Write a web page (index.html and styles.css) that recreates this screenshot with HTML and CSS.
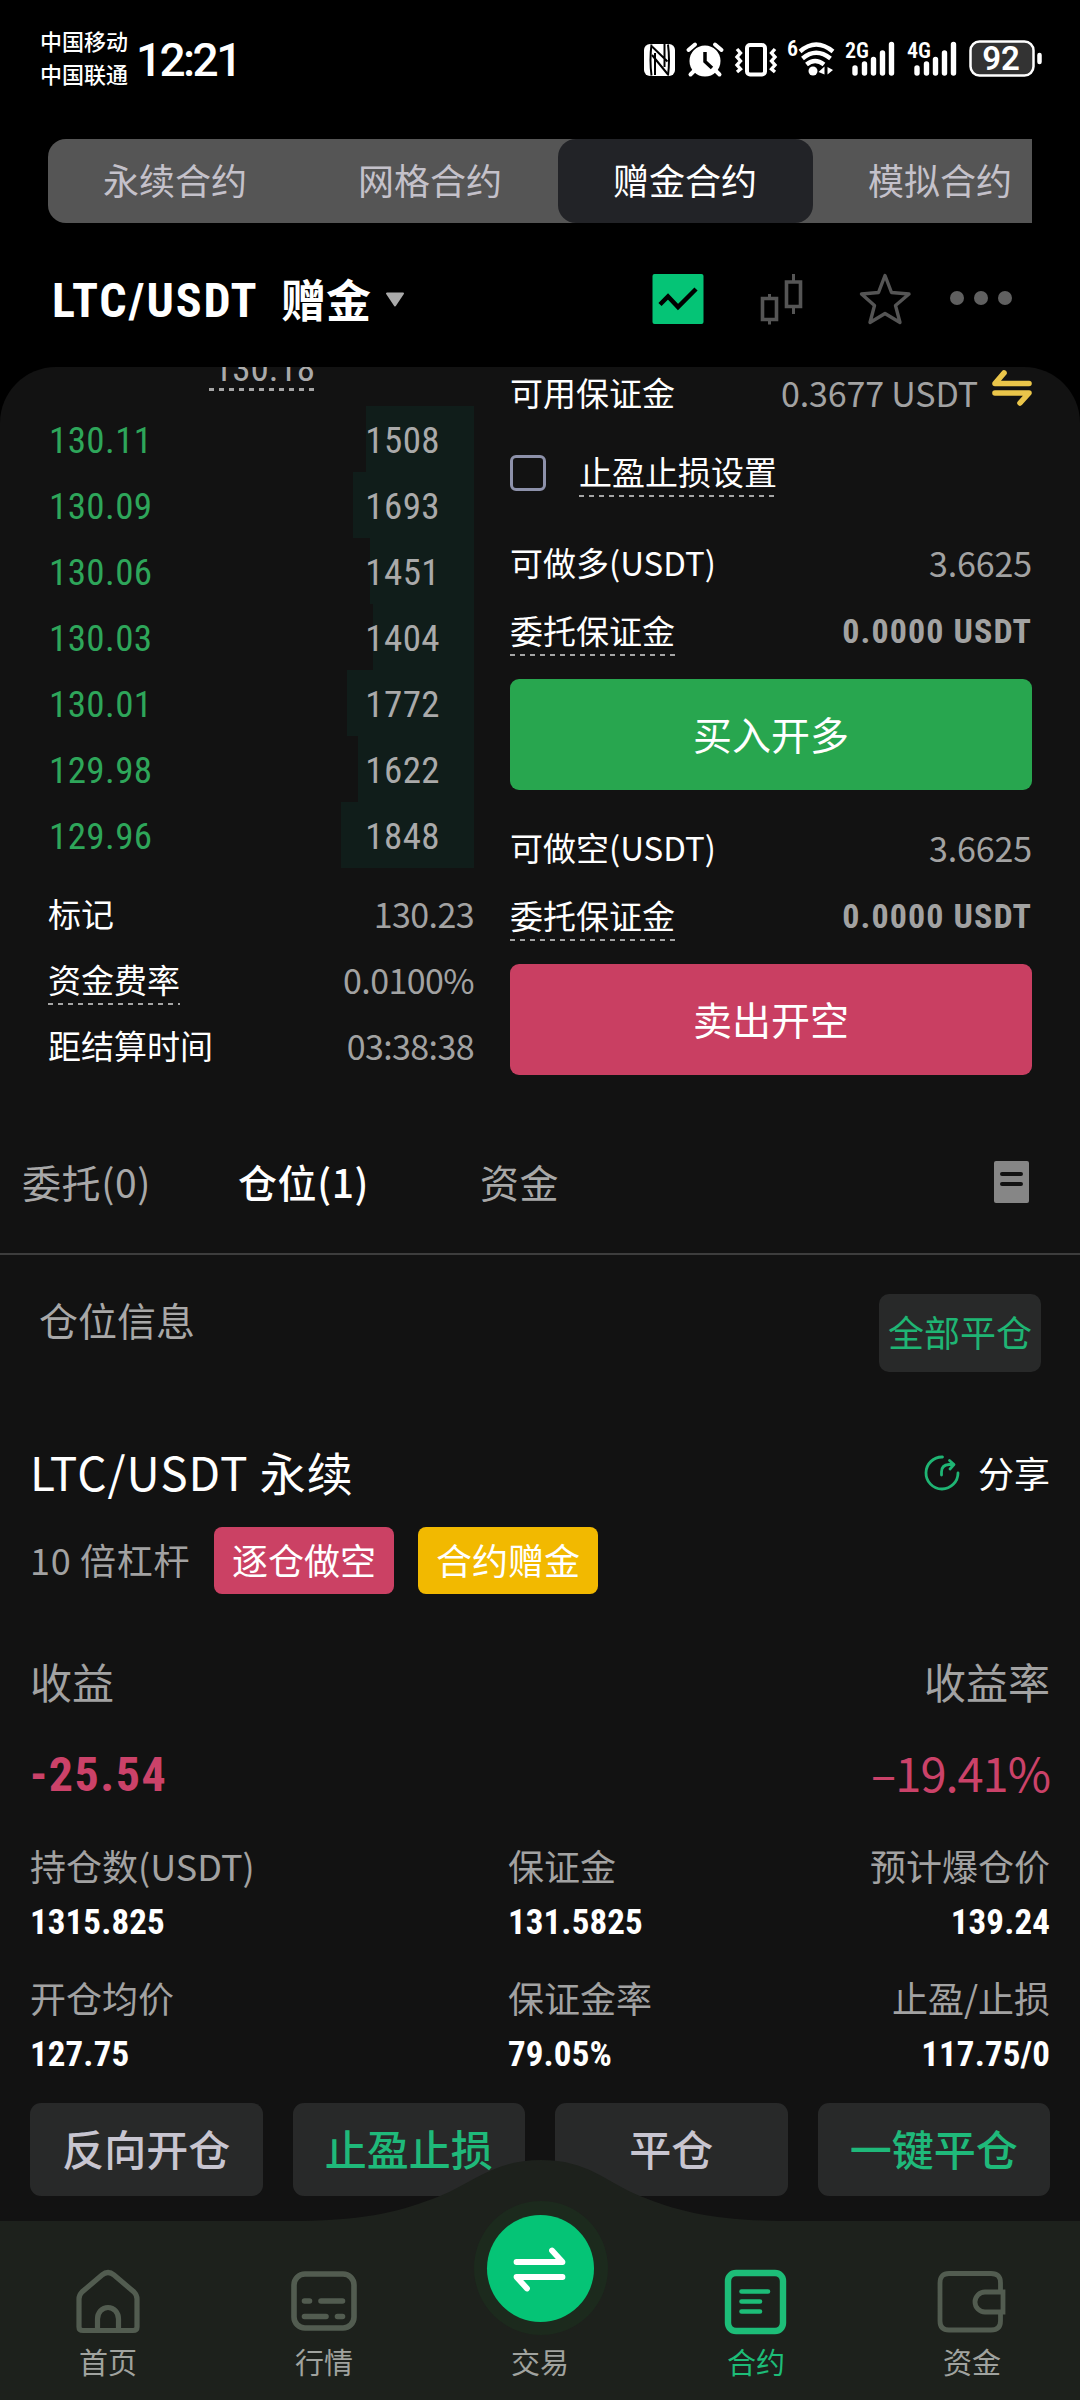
FILE: index.html
```
<!DOCTYPE html>
<html lang="zh-CN">
<head>
    <meta charset="UTF-8">
    <meta name="viewport" content="width=device-width, initial-scale=1.0">
    <title>赠金合约 LTC/USDT</title>
    <link rel="stylesheet" href="styles.css">
</head>
<body>
    <div class="status-bar">
        <div class="carriers">
            <span>中国移动</span>
            <span>中国联通</span>
        </div>
        <div class="clock">12:21</div>
        <svg class="status-icons" width="400" height="50" viewBox="644 33 400 50">
            <!-- NFC -->
            <rect x="644" y="43" width="31" height="32" rx="6" fill="#fff"/>
            <path d="M651.500 43.500Q649.500 59 651.500 74.500M668 43.500Q670 59 668 74.500" stroke="#000" stroke-width="2" fill="none"/>
            <path d="M652 45.500L667.500 60.500M652 54L668 73.500M655 52V74M664.500 43V66" stroke="#000" stroke-width="2" fill="none"/>
            <!-- alarm -->
            <circle cx="705" cy="60" r="15.500" fill="#fff"/>
            <path d="M688.500 49L695 43.500M721.500 49L715 43.500M694 70L690.500 73.500M716 70L719.500 73.500" stroke="#fff" stroke-width="4" stroke-linecap="round"/>
            <path d="M705 51V60.500L712 67" stroke="#000" stroke-width="3.500" fill="none"/>
            <!-- vibrate -->
            <rect x="747" y="44" width="18" height="29.500" rx="3" fill="none" stroke="#fff" stroke-width="4"/>
            <path d="M737 48L740.500 52L737 56L740.500 60L737 64L740.500 68L737 71M775 48L771.500 52L775 56L771.500 60L775 64L771.500 68L775 71" fill="none" stroke="#fff" stroke-width="3.400"/>
            <!-- wifi -->
            <text x="787" y="55" class="tiny">6</text>
            <path d="M800 50.500Q816 36.500 833 50.500M802.500 57.500Q816 46 830.500 57.500M806.500 63.500Q815 56.500 824 63.500" fill="none" stroke="#fff" stroke-width="4.400"/>
            <circle cx="813" cy="70" r="4.500" fill="#fff"/>
            <path d="M824.500 65.500V73.500L818.500 71ZM827.500 66L833 69L827.500 73.500Z" fill="#fff"/>
            <!-- signal -->
            <text x="845" y="57" class="tiny">2G</text>
            <path d="M855 67V72M864.500 63V72M873.500 58.500V72M882.500 52V72M891.500 43.500V72" stroke="#fff" stroke-width="5.400" stroke-linecap="round"/>
            <text x="907" y="57" class="tiny">4G</text>
            <path d="M917 67V72M926.500 63V72M935.500 58.500V72M944.500 52V72M953.500 43.500V72" stroke="#fff" stroke-width="5.400" stroke-linecap="round"/>
            <!-- battery -->
            <rect x="970.500" y="40.500" width="63" height="34" rx="9" fill="#333" stroke="#fff" stroke-width="2.500"/>
            <path d="M1039.500 54V61" stroke="#fff" stroke-width="4.500" stroke-linecap="round"/>
            <text x="1001" y="69" class="percent" text-anchor="middle">92</text>
        </svg>
    </div>

    <div class="type-tabs">
        <div class="type-tab">永续合约</div>
        <div class="type-tab">网格合约</div>
        <div class="type-tab active">赠金合约</div>
        <div class="type-tab">模拟合约</div>
    </div>

    <div class="pair-header">
        <span class="pair-name">LTC/USDT</span>
        <span class="pair-kind">赠金</span>
        <svg class="caret" width="20" height="16" viewBox="0 0 20 16"><path d="M2 1.500H18L10 13.500Z" fill="#aaa" stroke="#aaa" stroke-width="2" stroke-linejoin="round"/></svg>
        <svg class="pair-icons" width="364" height="52" viewBox="652 273 364 52">
            <rect x="652.500" y="274" width="51" height="50" rx="2" fill="#05c476"/>
            <path d="M660 304.500L668 296.500L678 307L696 289" fill="none" stroke="#000" stroke-width="4.500"/>
            <path d="M769.500 294V299M769.500 320V324.500M793.500 274V281.500M793.500 306V314" stroke="#555" stroke-width="3"/>
            <path d="M762.500 298.500H776.500V319.500H762.500ZM786.500 282H800.500V306.500H786.500Z" fill="none" stroke="#555" stroke-width="3.600"/>
            <path d="M885 275.500L891.500 292.500L909 294L895.500 305.500L900 322.500L885 313.500L870 322.500L874.500 305.500L861.500 294L878.500 292.500Z" fill="none" stroke="#555" stroke-width="3.400" stroke-linejoin="round"/>
            <circle cx="957" cy="298" r="7" fill="#606060"/>
            <circle cx="981" cy="298" r="7" fill="#606060"/>
            <circle cx="1005" cy="298" r="7" fill="#606060"/>
        </svg>
    </div>

    <div class="panel">
        <div class="trade">
            <div class="book">
                <div class="book-head"><span class="dashed">130.18</span></div>
                <div class="book-row"><span class="price">130.11</span><span class="amount">1508</span><i class="depth" style="width: 108px"></i></div>
                <div class="book-row"><span class="price">130.09</span><span class="amount">1693</span><i class="depth" style="width: 121px"></i></div>
                <div class="book-row"><span class="price">130.06</span><span class="amount">1451</span><i class="depth" style="width: 104px"></i></div>
                <div class="book-row"><span class="price">130.03</span><span class="amount">1404</span><i class="depth" style="width: 101px"></i></div>
                <div class="book-row"><span class="price">130.01</span><span class="amount">1772</span><i class="depth" style="width: 127px"></i></div>
                <div class="book-row"><span class="price">129.98</span><span class="amount">1622</span><i class="depth" style="width: 116px"></i></div>
                <div class="book-row"><span class="price">129.96</span><span class="amount">1848</span><i class="depth" style="width: 133px"></i></div>
                <div class="book-info">
                    <div class="info-row"><span>标记</span><span class="value">130.23</span></div>
                    <div class="info-row"><span class="dashed">资金费率</span><span class="value">0.0100%</span></div>
                    <div class="info-row"><span>距结算时间</span><span class="value">03:38:38</span></div>
                </div>
            </div>

            <div class="order">
                <div class="order-row available">
                    <span>可用保证金</span>
                    <span class="value">0.3677 USDT</span>
                    <svg class="transfer" width="40" height="36" viewBox="0 0 40 36"><path d="M37 13.500H3L12 3M3 23H37L28 33" fill="none" stroke="#eac54a" stroke-width="5.600" stroke-linecap="round" stroke-linejoin="round"/></svg>
                </div>
                <div class="order-row check-row">
                    <span class="checkbox"></span>
                    <span class="dashed">止盈止损设置</span>
                </div>
                <div class="order-row limit"><span>可做多(USDT)</span><span class="value">3.6625</span></div>
                <div class="order-row margin"><span class="dashed">委托保证金</span><span class="value bold">0.0000 USDT</span></div>
                <div class="btn buy">买入开多</div>
                <div class="order-row limit"><span>可做空(USDT)</span><span class="value">3.6625</span></div>
                <div class="order-row margin"><span class="dashed">委托保证金</span><span class="value bold">0.0000 USDT</span></div>
                <div class="btn sell">卖出开空</div>
            </div>
        </div>

        <div class="list-tabs">
            <span class="list-tab">委托(0)</span>
            <span class="list-tab active">仓位(1)</span>
            <span class="list-tab">资金</span>
            <svg class="history" width="35" height="42" viewBox="0 0 35 42"><rect width="35" height="42" rx="2" fill="#868686"/><path d="M8 13H27M8 23H27" stroke="#121212" stroke-width="4" stroke-linecap="round"/></svg>
        </div>

        <div class="position-head">
            <span class="position-title">仓位信息</span>
            <span class="close-all">全部平仓</span>
        </div>

        <div class="card">
            <div class="card-title">
                <span class="card-pair">LTC/USDT 永续</span>
                <span class="share">
                    <svg width="36" height="36" viewBox="0 0 36 36"><path d="M18.500 2A16 16 0 1 0 34 18M17.500 20V17Q17.500 10 25 9.500H29M25.500 5.500L30 9.500L26 14" fill="none" stroke="#1fb574" stroke-width="2.800" stroke-linecap="round" stroke-linejoin="round"/></svg>
                    分享
                </span>
            </div>
            <div class="tags">
                <span class="lever">10 倍杠杆</span>
                <span class="tag red">逐仓做空</span>
                <span class="tag yellow">合约赠金</span>
            </div>
            <div class="profit-label"><span>收益</span><span>收益率</span></div>
            <div class="profit-value"><span class="amount-lost">-25.54</span><span class="rate-lost">–19.41%</span></div>
            <div class="stats">
                <div class="stat"><span class="label">持仓数(USDT)</span><span class="num">1315.825</span></div>
                <div class="stat"><span class="label">保证金</span><span class="num">131.5825</span></div>
                <div class="stat right"><span class="label">预计爆仓价</span><span class="num">139.24</span></div>
                <div class="stat"><span class="label">开仓均价</span><span class="num">127.75</span></div>
                <div class="stat"><span class="label">保证金率</span><span class="num">79.05%</span></div>
                <div class="stat right"><span class="label">止盈/止损</span><span class="num">117.75/0</span></div>
            </div>
            <div class="actions">
                <div class="action">反向开仓</div>
                <div class="action green">止盈止损</div>
                <div class="action">平仓</div>
                <div class="action green">一键平仓</div>
            </div>
        </div>
    </div>

    <div class="nav">
        <svg class="nav-bg" width="1080" height="240" viewBox="0 2160 1080 240">
            <path d="M0 2221H300C370 2220 402 2211 440 2196C474 2182 494 2160 541 2160C588 2160 606 2182 640 2196C678 2211 710 2220 780 2221H1080V2400H0Z" fill="#1d211c"/>
            <circle cx="541" cy="2268" r="67" fill="#1c2a1d"/>
        </svg>
        <div class="nav-item">
            <svg width="66" height="66" viewBox="0 0 66 66" fill="none" stroke="#525c50" stroke-width="5.200"><path d="M4 30Q4 26 7 23L27 6Q33 1 39 6L59 23Q62 26 62 30V58Q62 61.500 58 61.500H8Q4 61.500 4 58ZM22.500 61V50A10.500 11.500 0 0 1 43.500 50V61"/></svg>
            <span>首页</span>
        </div>
        <div class="nav-item">
            <svg width="66" height="66" viewBox="0 0 66 66" fill="none" stroke="#525c50" stroke-width="5.600"><rect x="3" y="5" width="60" height="54" rx="11"/><path d="M13.500 32H18.500M30 32H51.500M13.500 47.500H35M46.500 47.500H51.500" stroke-linecap="round"/></svg>
            <span>行情</span>
        </div>
        <div class="nav-item">
            <div class="trade-button">
                <svg width="56" height="40" viewBox="0 0 56 40"><path d="M4.500 13H50.500L40 1.500M50.500 28H4.500L15 39.500" fill="none" stroke="#fff" stroke-width="5.800" stroke-linecap="round" stroke-linejoin="round"/></svg>
            </div>
            <span>交易</span>
        </div>
        <div class="nav-item active">
            <svg width="66" height="66" viewBox="0 0 66 66" fill="none" stroke="#1dbd78"><rect x="5" y="4" width="55" height="58" rx="8" stroke-width="6.400"/><path d="M18.500 22.500H45M18.500 32.500H37M18.500 42.500H37" stroke-width="4.600" stroke-linecap="round"/></svg>
            <span>合约</span>
        </div>
        <div class="nav-item">
            <svg width="70" height="66" viewBox="0 0 70 66" fill="none" stroke="#525c50" stroke-width="4.800"><path d="M63.500 22V14Q63.500 4.500 54 4.500H12Q3 4.500 3 14V52Q3 61 12 61H54Q63.500 61 63.500 52V43M66 23H48A10 10 0 0 0 48 43H66Z"/></svg>
            <span>资金</span>
        </div>
    </div>
</body>
</html>
```
FILE: styles.css
```
* {
    box-sizing: border-box;
}

body {
    margin: 0;
    width: 1080px;
    height: 2400px;
    position: relative;
    overflow: hidden;
    background: #000;
    color: #fff;
    font-family: "Noto Sans CJK SC", sans-serif;
    font-size: 33px;
    white-space: nowrap;
}

svg {
    display: block;
    flex: none;
}

/* status bar */
.status-bar {
    height: 118px;
    padding: 0 36px 0 40px;
    display: flex;
    align-items: center;
}

.carriers {
    display: flex;
    flex-direction: column;
    width: 96px;
    font-size: 22px;
    line-height: 33px;
    font-weight: 500;
    padding-bottom: 5px;
}

.clock {
    font-family: Roboto, sans-serif;
    font-size: 46px;
    font-weight: 500;
    letter-spacing: -2.6px;
    line-height: 46px;
    padding-top: 1px;
}

.status-icons {
    margin-left: auto;
    overflow: visible;
}

.tiny {
    font: 600 22px Roboto, sans-serif;
    font-stretch: 75%;
    fill: #fff;
}

.percent {
    font: 600 33px Roboto, sans-serif;
    fill: #fff;
}

/* contract type tabs */
.type-tabs {
    display: flex;
    margin: 21px 48px 0;
    width: 984px;
    height: 84px;
    overflow: hidden;
    background: #555;
    border-radius: 18px 0 0 18px;
}

.type-tab {
    flex: none;
    width: 255px;
    padding-right: 1px;
    line-height: 80px;
    text-align: center;
    font-size: 36px;
    color: #c4c1ca;
}

.type-tab.active {
    background: #222327;
    border-radius: 18px;
    color: #fff;
}

/* pair header */
.pair-header {
    height: 144px;
    padding: 9px 64px 0 52px;
    display: flex;
    align-items: center;
}

.pair-name {
    font-family: Roboto, sans-serif;
    font-stretch: 75%;
    font-size: 48px;
    font-weight: 700;
    letter-spacing: 1.9px;
    width: 229px;
    padding-top: 2px;
}

.pair-kind {
    font-size: 45px;
    font-weight: 700;
    line-height: 50px;
    padding-bottom: 2px;
}

.caret {
    margin-left: 14px;
}

.pair-icons {
    margin: -2px 0 0 auto;
}

/* main panel */
.panel {
    height: 2033px;
    background: #121212;
    border-radius: 56px 56px 0 0;
    overflow: hidden;
}

.trade {
    display: flex;
    justify-content: space-between;
    height: 744px;
    padding: 0 48px;
}

.dashed {
    display: inline-block;
    background: repeating-linear-gradient(90deg, #a5a5a5 0 5px, transparent 5px 10px) bottom / 100% 2px no-repeat;
}

.book {
    width: 426px;
}

.book-head {
    height: 39px;
    padding-left: 161px;
}

.book-head .dashed {
    display: block;
    width: 105px;
    height: 24px;
    padding-left: 5px;
    font-family: Roboto, sans-serif;
    font-stretch: 75%;
    font-size: 37px;
    line-height: 3px;
    color: #aaa;
    background-size: 100% 3px;
}

.book-row {
    display: flex;
    align-items: center;
    height: 66px;
    padding: 2px 34px 0 1px;
    position: relative;
    font-family: Roboto, sans-serif;
    font-stretch: 75%;
    font-size: 37px;
    letter-spacing: 0.4px;
    justify-content: space-between;
}

.price {
    color: #2ea65a;
}

.amount {
    color: #aaa;
    z-index: 1;
}

.depth {
    position: absolute;
    top: 0;
    right: 0;
    height: 66px;
    background: #101d1a;
}

.book-info {
    padding-top: 14px;
}

.info-row {
    display: flex;
    justify-content: space-between;
    align-items: center;
    height: 66px;
}

.info-row > span,
.order-row > span {
    line-height: 45px;
    padding-bottom: 3px;
}

.value {
    color: #a2a2a2;
    font-size: 34px;
    letter-spacing: -0.15px;
}

.info-row .value {
    letter-spacing: -0.6px;
}

.order {
    width: 522px;
}

.order-row {
    display: flex;
    align-items: center;
    justify-content: space-between;
}

.available {
    height: 54px;
}

.available .value {
    margin-left: auto;
}

.transfer {
    margin: -12px 0 0 14px;
}

.check-row {
    height: 104px;
    justify-content: flex-start;
    gap: 33px;
}

.order-row .checkbox {
    width: 36px;
    height: 36px;
    border: 3px solid #8d91aa;
    border-radius: 6px;
    padding: 0;
}

.limit {
    height: 78px;
}

.margin {
    height: 57px;
}

.order-row .value.bold {
    font-family: Roboto, sans-serif;
    font-stretch: 75%;
    font-size: 34px;
    font-weight: 700;
    letter-spacing: 1.1px;
    padding-bottom: 0;
}

.btn {
    height: 111px;
    margin: 19px 0 20px;
    border-radius: 9px;
    line-height: 108px;
    text-align: center;
    font-size: 39px;
}

.buy {
    background: #28a64f;
}

.sell {
    background: #c93f62;
}

/* orders / positions tabs */
.list-tabs {
    display: flex;
    align-items: center;
    height: 144px;
    padding: 0 51px 0 22px;
    border-bottom: 2px solid #3d3d3d;
    font-size: 39px;
    letter-spacing: 0.6px;
    color: #a8a8a8;
}

.list-tab {
    width: 216px;
    padding-bottom: 3px;
}

.list-tab.active {
    color: #fff;
    font-weight: 500;
    width: 242px;
}

.history {
    margin-left: auto;
}

.position-head {
    display: flex;
    justify-content: space-between;
    padding: 39px 39px 0 39px;
}

.position-title {
    font-size: 39px;
    line-height: 50px;
    color: #a8a8a8;
}

.close-all {
    width: 162px;
    height: 78px;
    border-radius: 10px;
    background: #282929;
    color: #1fb574;
    font-size: 36px;
    line-height: 74px;
    text-align: center;
}

/* position card */
.card {
    padding: 62px 30px 0;
}

.card-title {
    display: flex;
    justify-content: space-between;
    line-height: 75px;
    height: 80px;
    font-size: 46px;
}

.card-pair {
    letter-spacing: 1px;
}

.share {
    display: flex;
    align-items: center;
    gap: 18px;
    height: 77px;
    font-size: 36px;
}

.tags {
    display: flex;
    gap: 24px;
    margin-top: 13px;
    line-height: 64px;
    font-size: 36px;
}

.lever {
    color: #a2a2a2;
    width: 160px;
    letter-spacing: 0.7px;
}

.tag {
    width: 180px;
    height: 67px;
    border-radius: 8px;
    text-align: center;
}

.red {
    background: #cb4164;
}

.yellow {
    background: #f2b900;
}

.profit-label,
.profit-value {
    display: flex;
    justify-content: space-between;
    height: 60px;
    line-height: 56px;
}

.profit-label {
    margin-top: 59px;
    font-size: 42px;
    color: #a2a2a2;
}

.profit-value {
    margin-top: 31px;
    color: #cb4269;
    font-size: 47px;
}

.amount-lost {
    font-family: Roboto, sans-serif;
    font-stretch: 75%;
    font-size: 48px;
    font-weight: 700;
    letter-spacing: 1.5px;
    line-height: 62px;
}

.rate-lost {
    letter-spacing: -1px;
}

.stats {
    display: grid;
    grid-template-columns: 478px 300px 242px;
    row-gap: 28px;
    margin-top: 38px;
}

.stat {
    display: flex;
    flex-direction: column;
    gap: 4px;
}

.stat.right {
    text-align: right;
}

.label {
    font-size: 36px;
    height: 50px;
    line-height: 46px;
    color: #a2a2a2;
}

.num {
    font-family: Roboto, sans-serif;
    font-stretch: 75%;
    font-size: 35px;
    font-weight: 700;
    height: 50px;
    line-height: 53px;
    letter-spacing: 0.1px;
}

.actions {
    display: grid;
    grid-template-columns: repeat(4, 1fr);
    gap: 30px;
    margin-top: 25px;
}

.action {
    height: 93px;
    border-radius: 11px;
    background: #282929;
    color: #c8c5d0;
    font-size: 42px;
    font-weight: 500;
    line-height: 89px;
    text-align: center;
}

.action.green {
    color: #1fb97a;
}

/* bottom navigation lies over the scrolled page */
.nav {
    position: absolute;
    left: 0;
    bottom: 0;
    width: 1080px;
    height: 179px;
    display: grid;
    grid-template-columns: repeat(5, 1fr);
    grid-template-rows: 179px;
}

.nav-bg {
    position: absolute;
    left: 0;
    bottom: 0;
}

.nav-item {
    position: relative;
    display: flex;
    flex-direction: column;
    align-items: center;
    justify-content: flex-end;
    padding-bottom: 19px;
    font-size: 29px;
    line-height: 40px;
    color: #a0a39f;
}

.nav-item span {
    padding-top: 6px;
}

.nav-item.active {
    color: #1dbd78;
}

.trade-button {
    flex: none;
    width: 107px;
    height: 107px;
    margin-bottom: 13px;
    border-radius: 50%;
    background: #05c476;
    display: flex;
    align-items: center;
    justify-content: center;
}

.trade-button svg {
    overflow: visible;
}
```
